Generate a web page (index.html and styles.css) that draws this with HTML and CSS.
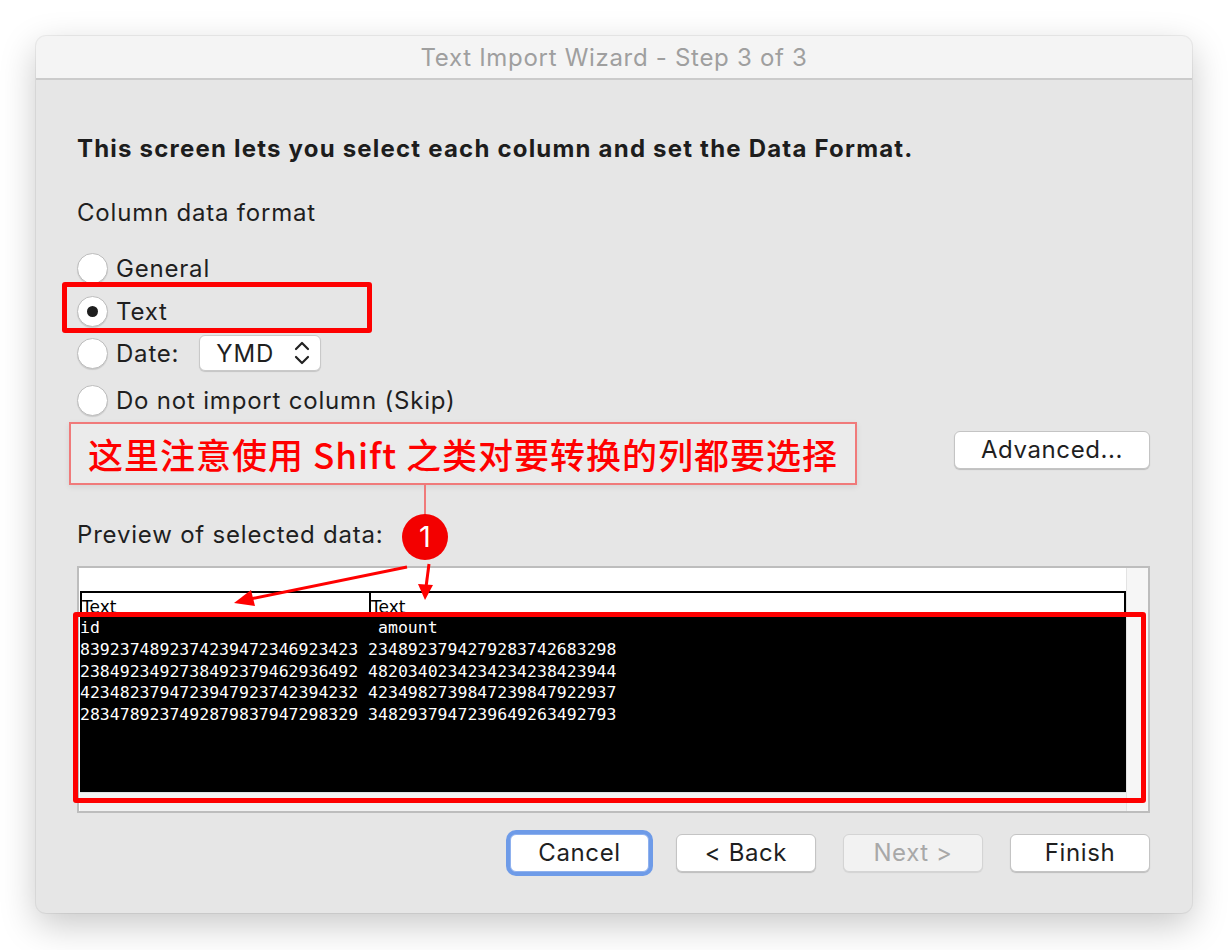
FILE: index.html
```html
<!DOCTYPE html>
<html lang="en">
<head>
<meta charset="utf-8">
<title>Text Import Wizard - Step 3 of 3</title>
<link rel="stylesheet" href="styles.css">
</head>
<body>
<div class="window">
  <div class="titlebar">Text Import Wizard - Step 3 of 3</div>
  <div class="content">
    <h1 class="heading">This screen lets you select each column and set the Data Format.</h1>
    <div class="label">Column data format</div>
    <div class="radios">
      <div class="radio-row r-general"><span class="radio"></span><span>General</span></div>
      <div class="radio-row r-text"><span class="radio checked"></span><span>Text</span></div>
      <div class="radio-row r-date"><span class="radio"></span><span>Date:</span>
        <div class="select"><span>YMD</span>
          <svg class="chev" width="16" height="26" viewBox="0 0 16 26"><path d="M2 9 L8 3 L14 9" fill="none" stroke="#222" stroke-width="2.2" stroke-linecap="round" stroke-linejoin="round"/><path d="M2 17 L8 23 L14 17" fill="none" stroke="#222" stroke-width="2.2" stroke-linecap="round" stroke-linejoin="round"/></svg>
        </div>
      </div>
      <div class="radio-row r-skip"><span class="radio"></span><span>Do not import column (Skip)</span></div>
    </div>
    <div class="adv-row"><button class="btn adv">Advanced...</button></div>
    <div class="label preview-label">Preview of selected data:</div>
    <div class="preview">
      <div class="sheet">
        <div class="sheet-head"><div class="hcell c1">Text</div><div class="hcell c2">Text</div></div>
        <pre class="sheet-data">id                            amount
8392374892374239472346923423 2348923794279283742683298
2384923492738492379462936492 4820340234234234238423944
4234823794723947923742394232 4234982739847239847922937
2834789237492879837947298329 3482937947239649263492793</pre>
        <div class="hscroll"></div>
      </div>
      <div class="vscroll"></div>
    </div>
    <div class="buttons">
      <button class="btn focus">Cancel</button>
      <button class="btn">&lt; Back</button>
      <button class="btn disabled">Next &gt;</button>
      <button class="btn">Finish</button>
    </div>
  </div>

  <div class="hl hl-text"></div>
  <div class="hl hl-data"></div>
  <div class="callout">这里注意使用 Shift 之类对要转换的列都要选择</div>
  <div class="callout-line"></div>
  <div class="badge">1</div>
  <svg class="arrows" width="1156" height="877" viewBox="0 0 1156 877">
    <line x1="371" y1="531" x2="214" y2="563" stroke="#ff0000" stroke-width="3"/>
    <polygon points="198,567 215,554 219,570" fill="#ff0000"/>
    <line x1="393" y1="528" x2="390" y2="551" stroke="#ff0000" stroke-width="3"/>
    <polygon points="389,564 382,548 397,549" fill="#ff0000"/>
  </svg>
</div>
</body>
</html>
```
FILE: styles.css
```css
html, body {
  margin: 0;
  padding: 0;
  background: #ffffff;
}
body {
  width: 1228px;
  height: 950px;
  font-family: "Inter", "Noto Sans", "Noto Sans CJK SC", sans-serif;
  color: #1f1f1f;
}
.window {
  position: relative;
  margin: 36px 0 0 36px;
  width: 1156px;
  height: 877px;
  background: #e6e6e6;
  border-radius: 10px;
  box-shadow: 0 12px 36px rgba(0,0,0,0.22), 0 0 0 1px rgba(0,0,0,0.06);
}
.titlebar {
  height: 42px;
  line-height: 44px;
  text-align: center;
  background: #f4f4f4;
  border-bottom: 2px solid #cbcbcb;
  border-radius: 10px 10px 0 0;
  color: #9f9f9f;
  font-size: 24px;
  letter-spacing: 0.7px;
}
.content {
  padding: 54px 42px 0 41px;
  display: flex;
  flex-direction: column;
}
.heading {
  margin: 0;
  font-size: 24px;
  font-weight: 700;
  line-height: 30px;
  letter-spacing: 1.2px;
  color: #1d1d1d;
}
.label {
  font-size: 24px;
  line-height: 30px;
  letter-spacing: 0.8px;
  margin-top: 34px;
}
.radios {
  display: flex;
  flex-direction: column;
  margin-top: 22px;
}
.radio-row {
  display: flex;
  align-items: center;
  height: 36px;
  font-size: 24px;
  letter-spacing: 0.8px;
  gap: 8px;
}
.r-text { margin-top: 7px; }
.r-date { margin-top: 6px; }
.r-skip { margin-top: 11px; }
.radio {
  width: 29px;
  height: 29px;
  border-radius: 50%;
  background: #ffffff;
  border: 1px solid #bdbdbd;
  box-shadow: 0 1px 1px rgba(0,0,0,0.12);
  display: flex;
  align-items: center;
  justify-content: center;
  flex: none;
}
.radio.checked::after {
  content: "";
  width: 11px;
  height: 11px;
  border-radius: 50%;
  background: #1e1e1e;
}
.select {
  margin-left: 12px;
  width: 122px;
  height: 36px;
  box-sizing: border-box;
  background: #ffffff;
  border: 1px solid #c9c9c9;
  border-radius: 6px;
  box-shadow: 0 1px 1px rgba(0,0,0,0.15);
  display: flex;
  align-items: center;
  justify-content: space-between;
  padding: 0 10px 0 16px;
}
.chev { display: block; }
.adv-row {
  display: flex;
  justify-content: flex-end;
  margin-top: 13px;
}
.btn {
  font-family: "Inter", "Noto Sans", sans-serif;
  font-size: 24px;
  letter-spacing: 0.6px;
  color: #1f1f1f;
  background: #ffffff;
  border: 1px solid #c4c4c4;
  border-radius: 6px;
  box-shadow: 0 1px 1px rgba(0,0,0,0.18);
  height: 38px;
  width: 140px;
  padding: 0;
  line-height: 36px;
}
.adv { width: 196px; }
.preview-label { margin-top: 51px; }
.preview {
  margin-top: 16px;
  height: 247px;
  box-sizing: border-box;
  border: 2px solid #bdbdbd;
  background: #ffffff;
  display: flex;
}
.sheet {
  flex: 1;
  padding: 23px 0 0 1px;
  display: flex;
  flex-direction: column;
}
.sheet-head {
  display: flex;
  height: 22px;
  border: 2px solid #000;
  border-bottom: none;
}
.hcell {
  font-family: "DejaVu Sans", sans-serif;
  font-size: 17px;
  line-height: 28px;
  color: #000;
  height: 22px;
}
.c1 { width: 287px; border-right: 2px solid #000; }
.c2 { flex: 1; }
.sheet-data {
  position: relative;
  margin: 0;
  background: #000;
  color: #ffffff;
  height: 177px;
  box-sizing: border-box;
  padding: 2px 0 0 0;
  font-family: "DejaVu Sans Mono", monospace;
  font-size: 16.5px;
  line-height: 21.8px;
  overflow: hidden;
}
.hscroll {
  flex: 1;
  background: #f1f1f1;
  border-top: 1px solid #e0e0e0;
}
.vscroll {
  width: 21px;
  background: #f6f6f6;
  border-left: 1px solid #e3e3e3;
}
.buttons {
  display: flex;
  justify-content: flex-end;
  gap: 27px;
  margin-top: 21px;
}
.btn.focus {
  box-shadow: 0 0 0 4px #6e9be8;
  border-color: #8fb1ee;
  width: 139px;
}
.btn.disabled {
  color: #a8a8a8;
  background: #f2f2f2;
  border-color: #d4d4d4;
  box-shadow: 0 1px 1px rgba(0,0,0,0.08);
}

/* annotations */
.hl {
  position: absolute;
  box-sizing: border-box;
  border: 5px solid #fe0000;
  border-radius: 3px;
}
.hl-text { left: 26px; top: 246px; width: 310px; height: 51px; }
.hl-data { left: 37px; top: 576px; width: 1073px; height: 191px; }
.callout {
  position: absolute;
  left: 33px;
  top: 386px;
  width: 788px;
  height: 63px;
  box-sizing: border-box;
  border: 2px solid #f07a7a;
  background: #ebebeb;
  box-shadow: 0 2px 6px rgba(0,0,0,0.08);
  color: #ff0000;
  font-family: "Noto Sans CJK SC", "Noto Sans", sans-serif;
  font-weight: 500;
  font-size: 35px;
  line-height: 59px;
  text-align: center;
  letter-spacing: 1px;
  white-space: nowrap;
}
.callout-line {
  position: absolute;
  left: 388px;
  top: 449px;
  width: 2px;
  height: 30px;
  background: #f07a7a;
}
.badge {
  position: absolute;
  left: 366px;
  top: 478px;
  width: 46px;
  height: 46px;
  border-radius: 50%;
  background: #f30000;
  color: #ffffff;
  font-family: "Inter", sans-serif;
  font-size: 29px;
  line-height: 46px;
  text-align: center;
}
.arrows {
  position: absolute;
  left: 0;
  top: 0;
  pointer-events: none;
}
```
